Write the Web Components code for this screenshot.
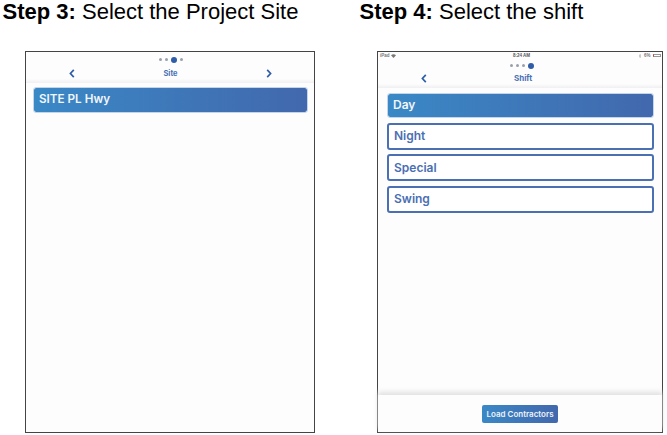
<!doctype html>
<html><head><meta charset="utf-8"><style>
html,body{margin:0;padding:0;background:#fff}
body{width:667px;height:435px;overflow:hidden;font-family:"Liberation Sans",Arial,sans-serif}
</style></head><body>
<guide-page>
  <guide-step style="--frame-left:25px;--frame-width:290px;--head-left:2.5px">
    <b slot="strong">Step 3:</b><span slot="rest">Select the Project Site</span>
    <phone-frame>
      <app-header title-text="Site" active="2" next></app-header>
      <choice-list style="--list-pad:4px 6px 0 7px;--sel-h:26px;--sel-size:11.7px">
        <choice-item selected>SITE PL Hwy</choice-item>
      </choice-list>
    </phone-frame>
  </guide-step>
  <guide-step style="--frame-left:17px;--frame-width:286px;--head-left:-0.5px">
    <b slot="strong">Step 4:</b><span slot="rest">Select the shift</span>
    <phone-frame>
      <ios-status></ios-status>
      <app-header title-text="Shift" active="3" compact></app-header>
      <choice-list style="--list-pad:4.5px 8px 0 9px">
        <choice-item selected>Day</choice-item>
        <choice-item>Night</choice-item>
        <choice-item>Special</choice-item>
        <choice-item>Swing</choice-item>
      </choice-list>
      <app-footer>Load Contractors</app-footer>
    </phone-frame>
  </guide-step>
</guide-page>
<script>
function def(name, html){
  customElements.define(name, class extends HTMLElement{
    constructor(){super();this.attachShadow({mode:'open'}).innerHTML=html;}
  });
}
def('guide-page',`<style>:host{display:grid;grid-template-columns:360px 307px;width:667px;height:435px}</style><slot></slot>`);
def('guide-step',`<style>
:host{display:flex;flex-direction:column;min-width:0}
h2{margin:0;height:51px;padding:1px 0 0 0;box-sizing:border-box;font:400 22px/22px "Liberation Sans",Arial,sans-serif;color:#000;white-space:nowrap;text-indent:var(--head-left)}
.w{padding-left:var(--frame-left);width:var(--frame-width);display:flex}
::slotted(b){font-weight:700}
</style><h2><slot name="strong"></slot> <slot name="rest"></slot></h2><div class="w"><slot></slot></div>`);
def('phone-frame',`<style>
:host{display:flex;flex-direction:column;box-sizing:border-box;width:var(--frame-width);height:382px;border:1px solid #444;background:#fdfdfe;font-family:Inter,"Noto Sans",sans-serif}
</style><slot></slot>`);
def('ios-status',`<style>
:host{display:flex;justify-content:space-between;align-items:center;height:7px;padding:0 1px 0 2px;font:600 4.5px/7px "Liberation Sans",Arial,sans-serif;color:#777;position:relative}
i{font-style:normal}
.l,.b{display:flex;align-items:center;gap:1.5px}
.c{position:absolute;left:3px;right:0;text-align:center;color:#555}
.bat{width:8px;height:3.5px;border:.5px solid #999;border-left:1.5px solid #d8413a;box-sizing:border-box;margin-left:1px}
svg{display:block}
</style><span class="l"><i>iPad</i><svg width="5" height="4" viewBox="0 0 5 4"><path d="M0 1.2Q2.5-.6 5 1.2L2.5 4Z" fill="#777"/></svg></span><i class="c">8:24 AM</i><span class="b"><svg width="2" height="4" viewBox="0 0 2 4"><path d="M.2 1 1.8 3 1 3.8V.2L1.8 1 .2 3" fill="none" stroke="#999" stroke-width=".4"/></svg><i>&nbsp;6%</i><span class="bat"></span></span>`);
customElements.define('app-header',class extends HTMLElement{
  constructor(){super();this.attachShadow({mode:'open'});}
  connectedCallback(){
    const active=+this.getAttribute('active'),t=this.getAttribute('title-text');
    const next=this.hasAttribute('next'),compact=this.hasAttribute('compact');
    const dots=[0,1,2,3].map(i=>`<span class="d${i===active?' on':''}"></span>`).join('');
    const chev=p=>`<svg width="6" height="9" viewBox="0 0 6 9"><path d="${p}" fill="none" stroke="#2f5da8" stroke-width="1.7"/></svg>`;
    this.shadowRoot.innerHTML=`<style>
:host{display:block;box-sizing:border-box;flex:none;height:${compact?'29px':'31px'};padding-top:${compact?'2px':'3px'};background:linear-gradient(#fdfdfe 86%,#f0f0f2)}
.dots{display:flex;justify-content:center;align-items:center;gap:3px;height:9px;padding-left:${compact?'3px':'1px'}}
.d{width:3px;height:3px;border-radius:50%;background:#9aa0aa}
.on{width:6px;height:6px;background:#2f5da8}
.row{display:grid;grid-template-columns:1fr auto 1fr;align-items:center;height:13px;margin-top:${compact?'2px':'3px'};padding:${compact?'0 37px 0 43px':'0 42px 0 43px'};font:700 ${compact?'8px':'7.5px'}/13px Inter,"Noto Sans",sans-serif;color:#4a72b5}
.r{justify-self:end}
svg{display:block}
</style><div class="dots">${dots}</div><div class="row"><span>${chev('M4.8 .8 1.4 4.5 4.8 8.2')}</span><span>${t}</span><span class="r">${next?chev('M1.2 .8 4.6 4.5 1.2 8.2'):''}</span></div>`;
  }
});
def('choice-list',`<style>
:host{display:flex;flex-direction:column;gap:4.5px;padding:var(--list-pad);flex:1;min-height:0}
</style><slot></slot>`);
def('choice-item',`<style>
:host{display:flex;align-items:center;box-sizing:border-box;height:27px;padding:0 5px;border:2px solid #4a6fb3;border-radius:3px;font:600 12px/1 Inter,"Noto Sans",sans-serif;color:#4a6fb3;background:#fff}
:host([selected]){height:var(--sel-h,25.5px);font-size:var(--sel-size,12px);color:#f2f6fb;border:1px solid #c3d5ea;padding:0 5px;background:linear-gradient(90deg,#3a88c6,#4268ad) padding-box}
</style><slot></slot>`);
def('app-footer',`<style>
:host{display:flex;justify-content:center;align-items:center;height:37px;flex:none;background:#fdfdfe;box-shadow:0 -3px 5px #e0e0e2}
span{display:flex;align-items:center;height:18px;padding:0 4px;border-radius:2px;color:#eef3f9;font:600 8px/1 Inter,"Noto Sans",sans-serif;background:linear-gradient(90deg,#3a88c6,#4268ad)}
</style><span><slot></slot></span>`);
</script>
</body></html>
